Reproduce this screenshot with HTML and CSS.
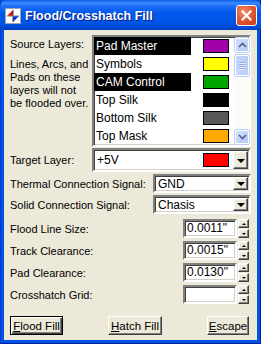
FILE: index.html
```html
<!DOCTYPE html>
<html lang="en">
<head>
    <meta charset="UTF-8">
    <title>Flood/Crosshatch Fill</title>
    <link rel="stylesheet" href="styles.css">
</head>
<body>
    <div class="window">
        <div class="titlebar">
            <svg class="app-icon" width="16" height="16" viewBox="0 0 16 16">
                <rect x="0.5" y="0.5" width="15" height="15" fill="#fff" stroke="#9aa3b5"/>
                <path d="M2 8 L8 2 L8 8 Z" fill="#f00000"/>
                <path d="M8 8 L14 8 L8 14 Z" fill="#0030e0"/>
                <path d="M8 2 V14" stroke="#404040" stroke-width="1"/>
                <path d="M2 8 H14" stroke="#808080" stroke-width="1"/>
            </svg>
            <span class="title">Flood/Crosshatch Fill</span>
            <div class="close">
                <svg width="11" height="11" viewBox="0 0 11 11">
                    <path d="M1.5 1.5 L9.5 9.5 M9.5 1.5 L1.5 9.5" stroke="#fff" stroke-width="2.2" stroke-linecap="square"/>
                </svg>
            </div>
        </div>

        <div class="client">
            <div class="source-row">
                <div class="source-text">
                    <div class="label">Source Layers:</div>
                    <div class="note">Lines, Arcs, and<br>Pads on these<br>layers will not<br>be flooded over.</div>
                </div>
                <div class="listbox sunken">
                    <div class="items">
                        <div class="item selected"><span class="name">Pad Master</span><span class="swatch" style="background:#a000a8"></span></div>
                        <div class="item"><span class="name">Symbols</span><span class="swatch" style="background:#ffff00"></span></div>
                        <div class="item selected"><span class="name">CAM Control</span><span class="swatch" style="background:#00a400"></span></div>
                        <div class="item"><span class="name">Top Silk</span><span class="swatch" style="background:#000000"></span></div>
                        <div class="item"><span class="name">Bottom Silk</span><span class="swatch" style="background:#585858"></span></div>
                        <div class="item"><span class="name">Top Mask</span><span class="swatch" style="background:#ffa800"></span></div>
                    </div>
                    <div class="scrollbar">
                        <div class="sb-btn">
                            <svg width="9" height="6" viewBox="0 0 9 6"><path d="M1 5 L4.5 1.5 L8 5" fill="none" stroke="#4d6185" stroke-width="1.6"/></svg>
                        </div>
                        <div class="sb-thumb">
                            <span></span><span></span><span></span><span></span>
                        </div>
                        <div class="sb-track"></div>
                        <div class="sb-btn">
                            <svg width="9" height="6" viewBox="0 0 9 6"><path d="M1 1 L4.5 4.5 L8 1" fill="none" stroke="#4d6185" stroke-width="1.6"/></svg>
                        </div>
                    </div>
                </div>
            </div>

            <div class="row row-target">
                <span class="label">Target Layer:</span>
                <div class="combo combo-wide sunken">
                    <span class="value">+5V</span>
                    <span class="swatch" style="background:#ff0000"></span>
                    <span class="drop raised"><i class="arrow"></i></span>
                </div>
            </div>

            <div class="row row-signal">
                <span class="label">Thermal Connection Signal:</span>
                <div class="combo combo-narrow sunken">
                    <span class="value">GND</span>
                    <span class="drop raised"><i class="arrow"></i></span>
                </div>
            </div>

            <div class="row row-signal">
                <span class="label">Solid Connection Signal:</span>
                <div class="combo combo-narrow sunken">
                    <span class="value">Chasis</span>
                    <span class="drop raised"><i class="arrow"></i></span>
                </div>
            </div>

            <div class="row row-spin first-spin">
                <span class="label">Flood Line Size:</span>
                <div class="spin-field sunken">0.0011"</div>
                <div class="spin"><span class="raised"><i class="up"></i></span><span class="raised"><i class="down"></i></span></div>
            </div>

            <div class="row row-spin">
                <span class="label">Track Clearance:</span>
                <div class="spin-field sunken">0.0015"</div>
                <div class="spin"><span class="raised"><i class="up"></i></span><span class="raised"><i class="down"></i></span></div>
            </div>

            <div class="row row-spin">
                <span class="label">Pad Clearance:</span>
                <div class="spin-field sunken">0.0130"</div>
                <div class="spin"><span class="raised"><i class="up"></i></span><span class="raised"><i class="down"></i></span></div>
            </div>

            <div class="row row-spin">
                <span class="label">Crosshatch Grid:</span>
                <div class="spin-field sunken"></div>
                <div class="spin"><span class="raised"><i class="up"></i></span><span class="raised"><i class="down"></i></span></div>
            </div>

            <div class="buttons">
                <button class="btn btn-default btn-flood"><u>F</u>lood Fill</button>
                <button class="btn btn-hatch"><u>H</u>atch Fill</button>
                <button class="btn btn-escape"><u>E</u>scape</button>
            </div>
        </div>
    </div>
</body>
</html>
```

FILE: styles.css
```css
body {
    margin: 0;
    font-family: "Liberation Sans", Arial, sans-serif;
    font-size: 11px;
    color: #000;
}
.window {
    width: 261px;
    height: 344px;
    display: flex;
    flex-direction: column;
    background: #0054e3;
    box-shadow: inset 1px 0 #0831d9, inset -1px 0 #001ea0, inset 0 -1px #001ea0;
}
.titlebar {
    height: 30px;
    flex: none;
    display: flex;
    align-items: center;
    padding: 0 5px;
    border-radius: 7px 7px 0 0;
    background: linear-gradient(#0a5ae8 0%, #3d8cff 10%, #1a6cf6 22%, #0058ea 45%, #0055e5 75%, #004ad6 92%, #003dc0 100%);
}
.app-icon {
    flex: none;
    margin-top: 1px;
}
.title {
    flex: 1;
    margin-left: 4px;
    color: #fff;
    font-weight: bold;
    font-size: 12.5px;
    text-shadow: 1px 1px #0a1883;
    margin-top: 1px;
}
.close {
    width: 19px;
    height: 19px;
    border: 1px solid #fff;
    border-radius: 3px;
    background: radial-gradient(circle at 35% 30%, #f19275 0%, #e25a35 45%, #c83612 100%);
    display: flex;
    align-items: center;
    justify-content: center;
    margin-right: -1px;
}
.client {
    flex: 1;
    margin: 0 4px 4px;
    background: #ece9d8;
    padding: 5px 6px 0 6px;
    display: flex;
    flex-direction: column;
}
.sunken {
    box-sizing: border-box;
    background: #fff;
    border: 2px solid;
    border-color: #808080 #fff #fff #808080;
    box-shadow: inset 1px 1px #404040, inset -1px -1px #d4d0c8;
}
.raised {
    box-sizing: border-box;
    background: #ece9d8;
    border: 1px solid;
    border-color: #fff #404040 #404040 #fff;
    box-shadow: inset -1px -1px #808080, inset 1px 1px #f4f3ee;
    display: flex;
    align-items: center;
    justify-content: center;
}

/* source layers */
.source-row {
    display: flex;
    height: 112px;
}
.source-text {
    flex: 1;
    padding-top: 3px;
    line-height: 13px;
}
.note {
    margin-top: 7px;
}
.listbox {
    width: 159px;
    height: 112px;
    display: flex;
}
.items {
    width: 139px;
}
.item {
    height: 18px;
    display: flex;
    align-items: center;
    font-size: 12px;
}
.item .name {
    width: 97px;
    height: 18px;
    line-height: 18px;
    padding-left: 2px;
    box-sizing: border-box;
}
.item.selected .name {
    background: #000;
    color: #fff;
}
.swatch {
    display: block;
    width: 26px;
    height: 14px;
    box-sizing: border-box;
    border: 1px solid #000;
    margin-left: 12px;
}
.scrollbar {
    width: 14px;
    margin: 1px 0 1px 2px;
    display: flex;
    flex-direction: column;
    background: #fbfbf8;
}
.sb-btn {
    height: 14px;
    flex: none;
    box-sizing: border-box;
    border: 1px solid #fff;
    border-radius: 2px;
    background: linear-gradient(135deg, #d3e0fd, #b5c9f7);
    box-shadow: 0 0 0 1px #bccff7;
    display: flex;
    align-items: center;
    justify-content: center;
}
.sb-thumb {
    height: 21px;
    margin-top: 3px;
    box-sizing: border-box;
    border: 1px solid #fff;
    border-radius: 2px;
    background: linear-gradient(90deg, #c6d6fc, #b9cdf8);
    box-shadow: 0 0 0 1px #bccff7;
    display: flex;
    flex-direction: column;
    align-items: center;
    justify-content: center;
    gap: 1px;
}
.sb-thumb span {
    display: block;
    width: 6px;
    height: 1px;
    background: #8ea6e3;
    box-shadow: 0 1px #eef3ff;
}
.sb-track {
    flex: 1;
}

/* form rows */
.row {
    display: flex;
    align-items: center;
}
.row .label {
    flex: 1;
}
.row-target {
    height: 24px;
    margin-top: 1px;
}
.row-signal {
    height: 19px;
    margin-top: 2px;
}
.row-spin {
    height: 19px;
    margin-top: 3px;
}
.first-spin {
    margin-top: 5px;
}
.combo {
    height: 100%;
    display: flex;
    align-items: center;
    font-size: 12px;
    padding: 0 1px 0 3px;
}
.combo .value {
    flex: 1;
}
.combo-wide {
    width: 159px;
}
.combo-wide .swatch {
    margin: 0 4px 0 0;
}
.combo-narrow {
    width: 98px;
}
.drop {
    width: 15px;
    height: calc(100% - 2px);
}
.arrow {
    display: block;
    width: 0;
    height: 0;
    border-left: 4px solid transparent;
    border-right: 4px solid transparent;
    border-top: 4px solid #000;
    margin-top: 1px;
}
.spin-field {
    width: 54px;
    height: 100%;
    font-size: 12px;
    line-height: 15px;
    padding-left: 2px;
}
.spin {
    width: 11px;
    height: 100%;
    margin: 0 2px 0 1px;
    display: flex;
    flex-direction: column;
    gap: 1px;
}
.spin span {
    flex: 1;
}
.spin .up, .spin .down {
    display: block;
    width: 0;
    height: 0;
    border-left: 2px solid transparent;
    border-right: 2px solid transparent;
}
.spin .up {
    border-bottom: 2px solid #000;
}
.spin .down {
    border-top: 2px solid #000;
}

/* buttons */
.buttons {
    display: flex;
    justify-content: space-between;
    margin-top: 12px;
    padding: 0 2px 0 0;
}
.btn {
    height: 19px;
    padding: 0;
    font-family: "Liberation Sans", Arial, sans-serif;
    font-size: 11.5px;
    color: #000;
    background: #ece9d8;
    border: 1px solid;
    border-color: #fff #404040 #404040 #fff;
    box-shadow: inset -1px -1px #808080;
}
.btn-default {
    border-color: #000;
    box-shadow: inset 1px 1px #fff, inset -1px -1px #404040, inset -2px -2px #808080;
}
.btn-flood {
    width: 53px;
}
.btn-hatch {
    width: 54px;
}
.btn-escape {
    width: 42px;
}
```
